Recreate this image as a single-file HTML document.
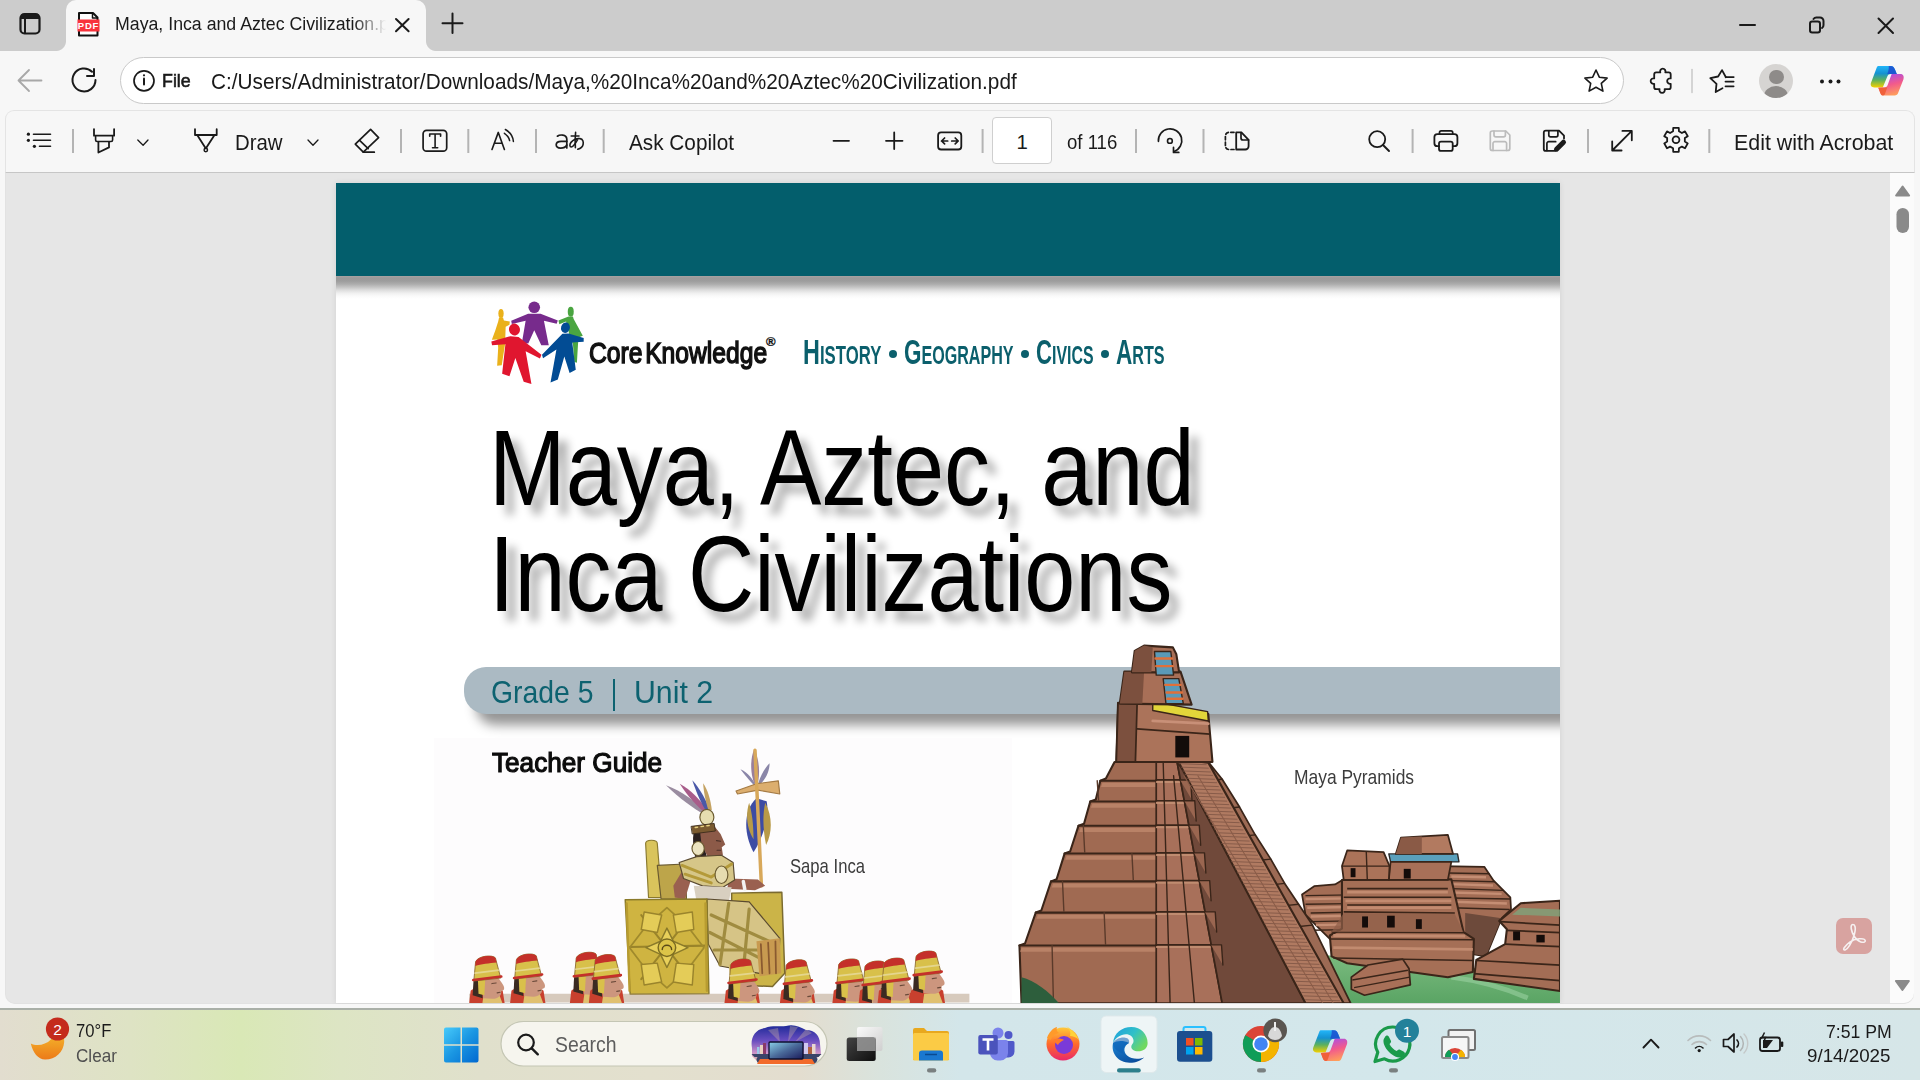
<!DOCTYPE html>
<html><head><meta charset="utf-8">
<style>
*{margin:0;padding:0;box-sizing:border-box}
html,body{width:1920px;height:1080px;overflow:hidden;background:#f7f7f7;font-family:"Liberation Sans",sans-serif;color:#1a1a1a}
.a{position:absolute}
svg.o{position:absolute;left:0;top:0;overflow:visible}
.t{position:absolute;white-space:nowrap;line-height:1}
</style></head><body>

<div class="a" style="left:0;top:0;width:1920px;height:51px;background:#cccccc"></div>
<div class="a" style="left:66px;top:0;width:360px;height:51px;background:#f7f7f7;border-radius:10px 10px 0 0"></div>
<div class="a" style="left:56px;top:41px;width:10px;height:10px;background:radial-gradient(circle at 0 0,#cccccc 9.5px,#f7f7f7 10.5px)"></div>
<div class="a" style="left:426px;top:41px;width:10px;height:10px;background:radial-gradient(circle at 100% 0,#cccccc 9.5px,#f7f7f7 10.5px)"></div>
<div class="a" style="left:120px;top:57px;width:1504px;height:47px;background:#fff;border:1px solid #c9c9c9;border-radius:24px"></div>
<div class="a" style="left:5px;top:110px;width:1910px;height:63px;background:#f7f7f7;border:1px solid #e4e4e4;border-bottom:1px solid #c6c6c6;border-radius:9px 9px 0 0"></div>
<div class="a" style="left:5px;top:173px;width:1909px;height:831px;background:#e6e6e6;border-radius:0 0 10px 10px;border:1px solid #e2e2e2;border-top:none"></div>
<div class="a" style="left:1890px;top:173px;width:24px;height:830px;background:#fbfbfb;border-radius:0 0 10px 0"></div>

<div class="t" style="left:114.58px;top:15.00px;font-size:18.46px;font-weight:normal;color:#1a1a1a;transform:scaleX(0.9616);transform-origin:0 0;-webkit-mask-image:linear-gradient(90deg,#000 0,#000 248px,transparent 282px);mask-image:linear-gradient(90deg,#000 0,#000 248px,transparent 282px);width:292px;overflow:hidden;">Maya, Inca and Aztec Civilization.p</div>
<div class="t" style="left:161.57px;top:72.00px;font-size:18.90px;font-weight:normal;color:#1a1a1a;transform:scaleX(0.9444);transform-origin:0 0;-webkit-text-stroke:0.6px #1a1a1a;">File</div>
<div class="t" style="left:211.46px;top:72.00px;font-size:21.37px;font-weight:normal;color:#1a1a1a;transform:scaleX(0.9723);transform-origin:0 0;">C:/Users/Administrator/Downloads/Maya,%20Inca%20and%20Aztec%20Civilization.pdf</div>
<div class="t" style="left:235.37px;top:132.00px;font-size:21.80px;font-weight:normal;color:#1a1a1a;transform:scaleX(0.9356);transform-origin:0 0;">Draw</div>
<div class="t" style="left:629.10px;top:132.00px;font-size:21.66px;font-weight:normal;color:#1a1a1a;transform:scaleX(0.9582);transform-origin:0 0;">Ask Copilot</div>
<div class="a" style="left:992px;top:117px;width:60px;height:47px;background:#fff;border:1px solid #cfcfcf;border-radius:4px"></div>
<div class="t" style="left:1016.47px;top:132.00px;font-size:20.35px;font-weight:normal;color:#1a1a1a;">1</div>
<div class="t" style="left:1067.26px;top:132.00px;font-size:20.35px;font-weight:normal;color:#1a1a1a;transform:scaleX(0.9136);transform-origin:0 0;">of 116</div>
<div class="t" style="left:1733.59px;top:132.00px;font-size:22.09px;font-weight:normal;color:#1a1a1a;transform:scaleX(0.9686);transform-origin:0 0;">Edit with Acrobat</div>
<svg class="o" width="1920" height="180" fill="none" stroke="#1a1a1a" stroke-width="1.7" stroke-linecap="round" stroke-linejoin="round">
  <rect x="20.5" y="14" width="19" height="19.5" rx="4" stroke-width="2.2"/>
  <rect x="21" y="14.5" width="18" height="4.5" fill="#1a1a1a" stroke="none"/>
  <path d="M25 19v14" stroke-width="2"/>
  <path d="M79 13h14l4.5 4.5V35.5H79z" fill="#fff" stroke="#111" stroke-width="2"/>
  <path d="M92.5 13.5v4.5h4.5" stroke="#111" stroke-width="1.5"/>
  <rect x="77.5" y="19.5" width="22" height="12" fill="#f8333c" stroke="none"/>
  <text x="88.5" y="29.3" font-family="Liberation Sans" font-weight="bold" font-size="9.5" fill="#fff" stroke="none" text-anchor="middle" letter-spacing="0.8">PDF</text>
  <path d="M396 19l12.6 12.3M408.6 19l-12.6 12.3" stroke-width="2"/>
  <path d="M452.5 13.5v19.5M442.5 23.2h20" stroke-width="2"/>
  <path d="M1740 25h15" stroke-width="2"/>
  <rect x="1810" y="21.5" width="10" height="11" rx="2.2" stroke-width="2"/>
  <path d="M1813.5 19a3.5 3.5 0 0 1 3-1.5h3.5a3.5 3.5 0 0 1 3.5 3.5v4a3.5 3.5 0 0 1 -1.5 3" stroke-width="2"/>
  <path d="M1878.5 18.5l14.5 14.5M1893 18.5l-14.5 14.5" stroke-width="2"/>
  <path d="M41.5 80.5H18.5M29 70l-10.5 10.5L29 91" stroke="#a8a8a8" stroke-width="1.8"/>
  <path d="M95.5 80a11.5 11.5 0 1 1 -3.5 -8.3" stroke-width="2"/>
  <path d="M94 69v7h-7" stroke-width="2"/>
  <circle cx="144" cy="80.8" r="10" stroke-width="1.7"/>
  <path d="M144 78.5v6" stroke-width="2"/>
  <circle cx="144" cy="75.3" r="1.1" fill="#1a1a1a" stroke="none"/>
  <path d="M1596 70l3.3 7.2 7.8.9-5.8 5.3 1.6 7.7-6.9-3.9-6.9 3.9 1.6-7.7-5.8-5.3 7.8-.9z" stroke-width="1.6"/>
  <path d="M1656.2 72.4h4.1a2.7 2.7 0 1 1 5 0h3.4a2 2 0 0 1 2 2v4a2.8 2.8 0 1 0 0 5.4v3.4a2 2 0 0 1 -2 2h-4.1a2.7 2.7 0 1 1 -5 0h-3.4a2 2 0 0 1 -2-2v-3.4a2.8 2.8 0 1 1 0-5.4v-4a2 2 0 0 1 2-2z" stroke-width="1.8"/>
  <path d="M1692 69.5v23" stroke="#c8c8c8" stroke-width="1.5"/>
  <path d="M1722.5 88.3l-6.8 3.7 .8-8.2-6.2-5.7 7.8-1.6 3.9-6.4 3.9 7.1" stroke-width="1.8"/>
  <path d="M1725.7 77.1h8M1725.5 81.6h8.1M1725.5 86.3h8.1" stroke-width="1.8"/>
  <circle cx="1822" cy="81.5" r="2" fill="#1a1a1a" stroke="none"/>
  <circle cx="1830.5" cy="81.5" r="2" fill="#1a1a1a" stroke="none"/>
  <circle cx="1838.5" cy="81.5" r="2" fill="#1a1a1a" stroke="none"/>
</svg>
<div class="a" style="left:1759px;top:64px;width:34px;height:34px;border-radius:50%;background:#d6d4d2;overflow:hidden">
  <div class="a" style="left:10px;top:5.5px;width:14.5px;height:14.5px;border-radius:50%;background:#8e8b89"></div>
  <div class="a" style="left:5px;top:22px;width:24px;height:20px;border-radius:50%;background:#8e8b89"></div>
</div>

<svg class="o" width="1920" height="180" fill="none" stroke="#1a1a1a" stroke-width="1.7" stroke-linecap="round" stroke-linejoin="round">
  <!-- list -->
  <circle cx="28.4" cy="134.2" r="1.6" fill="#1a1a1a" stroke="none"/>
  <circle cx="28.4" cy="140.3" r="1.6" fill="#1a1a1a" stroke="none"/>
  <circle cx="34.4" cy="146.3" r="1.6" fill="#1a1a1a" stroke="none"/>
  <path d="M33.5 134.2h17M33.5 140.3h17M39.5 146.3h11" stroke-width="1.6"/>
  <!-- separators -->
  <g stroke="#b4b4b4" stroke-width="2" stroke-linecap="butt">
    <path d="M73 129v24M401 129v24M468.3 129v24M536 129v24M603.7 129v24M982.6 129v24M1136 129v24M1203.5 129v24M1412.6 129v24M1588 129v24M1709.3 129v24"/>
  </g>
  <!-- highlighter -->
  <path d="M94 129.1v6.6h20.1v-6.6" stroke-width="1.8"/>
  <path d="M95.6 136.5v3.5a1.5 1.5 0 0 0 1.5 1.5h14a1.5 1.5 0 0 0 1.5-1.5v-3.5" stroke-width="1.6"/>
  <path d="M98.4 141.9v10.6l10.6-5.1v-5.5" stroke-width="1.8"/>
  <path d="M137.8 140l5.3 5.2 4.9-5.2" stroke-width="1.3"/>
  <!-- draw pen -->
  <path d="M195 129.2v5.8h21.7v-5.8" stroke-width="1.8"/>
  <path d="M197.5 135.4l8.3 13 8.4-13" stroke-width="1.8"/>
  <circle cx="205.8" cy="150" r="1.7" stroke-width="1.5"/>
  <path d="M308 140l5 5.2 5-5.2" stroke-width="1.3"/>
  <!-- eraser -->
  <path d="M370.6 129.3l8 8.4-15.3 14.5-8-8z" stroke-width="1.7"/>
  <path d="M359.6 140.3l8.6 8.3M363.3 152.2h11" stroke-width="1.7"/>
  <!-- text box -->
  <rect x="423.1" y="130.3" width="23.6" height="20.9" rx="3.5" stroke-width="1.7"/>
  <path d="M429.7 136.2v-2.2h10.9v2.2M435.1 134v13.8M432.5 147.8h5.2" stroke-width="1.6"/>
  <!-- read aloud -->
  <path d="M492 149.5l6.3-17.1 6.1 17.1M494.7 143.2h7.2" stroke-width="1.6"/>
  <path d="M504.4 133.3q4.6 3.2 5.2 7.3" stroke-width="1.5"/>
  <path d="M505.4 129.5q7.3 4.3 8 11.9" stroke-width="1.5"/>
  <!-- a-a -->
  <path d="M557.4 136.2C559.5 134.6 566.4 134 566.8 139V148" stroke-width="1.7"/>
  <path d="M566.8 141.3H561.2C557.8 141.3 556.2 143 556.2 144.8 556.2 147 558 148.1 560.6 148.1 563.6 148.1 566 146.6 566.8 145" stroke-width="1.7"/>
  <path d="M571.2 136h7.8M575.6 132.3C575 138 575 143.5 575.4 147.6" stroke-width="1.6"/>
  <path d="M578.2 138.6C576.2 142.2 573.3 147 571.2 147 569.6 147 569.4 144.2 571 142.4 573.2 140 577 138.2 580 138.6 583 139 583.6 142 583.1 144.5 582.6 147 580.2 148.6 577.8 149.3" stroke-width="1.6"/>
  <!-- zoom -->
  <path d="M833.5 140.8h15.5M886 140.8h16.5M894.2 132.5v16.5" stroke-width="1.8"/>
  <!-- fit width -->
  <rect x="938.1" y="132.4" width="23.2" height="17.1" rx="3" stroke-width="1.8"/>
  <path d="M941.5 141h6.2M944.6 138l-3 3 3 2.8M951.7 141h6.2M955.2 138l3 3-3 2.8" stroke-width="1.7"/>
  <!-- rotate -->
  <path d="M1158.4 141.3a11.7 11.7 0 1 1 15.7 10.2" stroke-width="1.7"/>
  <path d="M1173.5 147.4v5h5.3" stroke-width="1.7"/>
  <circle cx="1169.9" cy="140.9" r="2.4" stroke-width="1.6"/>
  <!-- page view -->
  <path d="M1234 132.3h-5a3.6 3.6 0 0 0 -3.6 3.6v10a3.6 3.6 0 0 0 3.6 3.6h5" stroke-width="1.7" stroke-dasharray="3.2 2.4"/>
  <path d="M1236.2 132.3h5.2l7.2 7.5v6.4a3.3 3.3 0 0 1 -3.3 3.3h-9.1z" stroke-width="1.8"/>
  <path d="M1241 132.5v5.5a2 2 0 0 0 2 2h5.5" stroke-width="1.7"/>
  <!-- search -->
  <circle cx="1377.2" cy="139.2" r="8" stroke-width="1.8"/>
  <path d="M1383 145l6 6" stroke-width="1.9"/>
  <!-- print -->
  <path d="M1439.5 134v-1.5a1.7 1.7 0 0 1 1.7-1.7h9.8a1.7 1.7 0 0 1 1.7 1.7v1.5" stroke-width="1.7"/>
  <path d="M1439 146.2h-1.6a3 3 0 0 1 -3-3v-6.1a3 3 0 0 1 3-3h17a3 3 0 0 1 3 3v6.1a3 3 0 0 1 -3 3h-1.6" stroke-width="1.8"/>
  <rect x="1439" y="141.6" width="13.7" height="9.3" rx="2" stroke-width="1.8"/>
  <!-- save disabled -->
  <path d="M1492.3 131h13.5l4 4v13.5a2 2 0 0 1 -2 2h-15.5a2 2 0 0 1 -2-2v-15.5a2 2 0 0 1 2-2z" stroke="#bcbcbc" stroke-width="1.7"/>
  <path d="M1494 131v4a1.8 1.8 0 0 0 1.8 1.8h7.8a1.8 1.8 0 0 0 1.8-1.8v-4M1493 150.5v-7a1.8 1.8 0 0 1 1.8-1.8h10a1.8 1.8 0 0 1 1.8 1.8v7" stroke="#bcbcbc" stroke-width="1.7"/>
  <!-- save as -->
  <path d="M1555 150.9h-9.2a2 2 0 0 1 -2-2v-16.3a2 2 0 0 1 2-2h13.2l5 5v3" stroke-width="1.8"/>
  <path d="M1548.8 131v4a1.8 1.8 0 0 0 1.8 1.8h5.5a1.8 1.8 0 0 0 1.8-1.8v-4M1546.9 150.5v-7a1.8 1.8 0 0 1 1.8-1.8h7" stroke-width="1.7"/>
  <path d="M1556.5 149.2l7-7" stroke-width="5"/>
  <!-- fullscreen -->
  <path d="M1622.4 130.9h9.4v9.4M1631.8 130.9l-19.6 19.6M1612.2 141.4v9.1h9.4" stroke-width="1.8"/>
  <!-- gear -->
  <path d="M1673.06 131.29 L1673.23 127.82 L1678.77 127.82 L1678.93 131.29 L1681.90 133.00 L1685.00 131.41 L1687.76 136.20 L1684.83 138.08 L1684.84 141.51 L1687.76 143.40 L1685.00 148.19 L1681.90 146.59 L1678.94 148.31 L1678.77 151.78 L1673.23 151.78 L1673.07 148.31 L1670.10 146.60 L1667.00 148.19 L1664.24 143.40 L1667.17 141.52 L1667.16 138.09 L1664.24 136.20 L1667.00 131.41 L1670.10 133.01z" stroke-width="1.8"/>
  <circle cx="1676" cy="139.8" r="3.4" stroke-width="1.8"/>
</svg>

<svg class="o" width="1920" height="180"><g transform="translate(1865,60) scale(0.037)">
<defs>
<linearGradient id="acpl" x1="0" y1="0" x2="0" y2="1"><stop offset="0" stop-color="#22b6fa"/><stop offset="0.35" stop-color="#1592d0"/><stop offset="0.65" stop-color="#5ab060"/><stop offset="1" stop-color="#f4d000"/></linearGradient>
<linearGradient id="acpr" x1="0.3" y1="0" x2="0.6" y2="1"><stop offset="0" stop-color="#a84ee8"/><stop offset="0.5" stop-color="#f25a8c"/><stop offset="1" stop-color="#ffa05a"/></linearGradient>
</defs>
<path d="M350 160L700 160C760 160 790 200 810 260L860 380 700 380C650 380 620 400 600 450L480 740 250 740C180 740 140 690 160 620L300 250C320 190 340 160 350 160z" fill="url(#acpl)"/>
<path d="M640 160L700 160C760 160 790 200 810 260L860 380 600 380C640 300 650 200 640 160z" fill="#1c4ed0" opacity="0.85"/>
<path d="M720 380L960 380C1030 380 1060 440 1040 520L900 880C880 940 850 960 800 960L520 960C460 960 430 940 420 900L360 750 520 740C560 740 590 720 610 680z" fill="url(#acpr)"/>
<path d="M360 750L600 740 540 920C520 960 480 970 450 950 420 930 400 860 360 750z" fill="#f0603a"/>
</g></svg>

<div class="a" style="left:336px;top:183px;width:1224px;height:820px;background:#fff;overflow:hidden;box-shadow:0 0 6px rgba(0,0,0,.09)">
<div class="a" style="left:-336px;top:-183px;width:1920px;height:1080px">
<div class="a" style="left:336px;top:183px;width:1224px;height:93px;background:#035e6c"></div>
<div class="a" style="left:336px;top:276px;width:1224px;height:23px;background:linear-gradient(#a8a2a2 0,#9a9a9a 2px,#9d9d9d 5px,#acacac 8px,#c3c3c3 11px,#dcdcdc 14px,#efefef 17px,#fafafa 20px,#fff 23px)"></div>
<div class="a" style="left:434px;top:738px;width:578px;height:270px;background:#fdfcfd"></div>
<div class="a" style="left:464px;top:667px;width:1120px;height:47px;background:#abbac3;border-radius:22px 0 0 22px;box-shadow:9px 14px 12px -3px rgba(0,0,0,.42)"></div>
<div class="t" style="left:490.78px;top:677.00px;font-size:31.25px;font-weight:normal;color:#0d6270;transform:scaleX(0.9073);transform-origin:0 0;">Grade 5</div>
<div class="a" style="left:613px;top:679px;width:2.2px;height:31.5px;background:#0d6270"></div>
<div class="t" style="left:633.53px;top:677.00px;font-size:31.25px;font-weight:normal;color:#0d6270;transform:scaleX(0.9684);transform-origin:0 0;">Unit 2</div>
<div class="t" style="left:589.37px;top:338.00px;font-size:29.80px;font-weight:normal;color:#111;transform:scaleX(0.8275);transform-origin:0 0;word-spacing:-5px;-webkit-text-stroke:1.5px #111;">Core Knowledge</div>
<div class="t" style="left:766px;top:335px;font-size:13px;font-weight:bold;color:#111;-webkit-text-stroke:0.3px #111">&#174;</div>
<div class="t" style="left:803.48px;top:335.00px;font-size:34.88px;font-weight:bold;color:#0b5f6c;transform:scaleX(0.6700);transform-origin:0 0;">H<span style="font-size:25.00px">ISTORY</span></div>
<div class="t" style="left:904.10px;top:335.00px;font-size:34.88px;font-weight:bold;color:#0b5f6c;transform:scaleX(0.6438);transform-origin:0 0;">G<span style="font-size:25.00px">EOGRAPHY</span></div>
<div class="t" style="left:1036.11px;top:335.00px;font-size:34.88px;font-weight:bold;color:#0b5f6c;transform:scaleX(0.6351);transform-origin:0 0;">C<span style="font-size:25.00px">IVICS</span></div>
<div class="t" style="left:1116.44px;top:335.00px;font-size:34.88px;font-weight:bold;color:#0b5f6c;transform:scaleX(0.6467);transform-origin:0 0;">A<span style="font-size:25.00px">RTS</span></div>
<div class="a" style="left:889.0px;top:350px;width:8px;height:8px;border-radius:50%;background:#0b5f6c"></div>
<div class="a" style="left:1021.2px;top:350px;width:8px;height:8px;border-radius:50%;background:#0b5f6c"></div>
<div class="a" style="left:1101.0px;top:350px;width:8px;height:8px;border-radius:50%;background:#0b5f6c"></div>
<div class="t" style="left:489.34px;top:415.00px;font-size:107.56px;font-weight:normal;color:#000;transform:scaleX(0.8554);transform-origin:0 0;text-shadow:11px 10px 9px rgba(0,0,0,.30);">Maya, Aztec, and</div>
<div class="t" style="left:488.74px;top:521.00px;font-size:107.56px;font-weight:normal;color:#000;transform:scaleX(0.8531);transform-origin:0 0;text-shadow:11px 10px 9px rgba(0,0,0,.30);">Inca Civilizations</div>
<div class="t" style="left:491.98px;top:749.00px;font-size:27.62px;font-weight:normal;color:#0c0c0c;transform:scaleX(0.9474);transform-origin:0 0;-webkit-text-stroke:1.2px #0c0c0c;">Teacher Guide</div>
<div class="t" style="left:790.45px;top:856.00px;font-size:20.06px;font-weight:normal;color:#3c3c3c;transform:scaleX(0.8304);transform-origin:0 0;">Sapa Inca</div>
<div class="t" style="left:1294.21px;top:768.00px;font-size:19.62px;font-weight:normal;color:#3c3c3c;transform:scaleX(0.8884);transform-origin:0 0;">Maya Pyramids</div>
<svg class="o" width="1920" height="1080" style="position:absolute;left:0;top:0">
<defs>
<linearGradient id="gs" x1="0" y1="0" x2="0" y2="1"><stop offset="0" stop-color="#7cbc80"/><stop offset="1" stop-color="#5aa464"/></linearGradient>
<pattern id="hatch" width="20" height="14" patternUnits="userSpaceOnUse" patternTransform="rotate(-33)"><rect width="20" height="14" fill="#b07a62"/><path d="M0 7h20" stroke="#6e4c3c" stroke-width="3"/></pattern>
<pattern id="hatch2" width="20" height="12" patternUnits="userSpaceOnUse" patternTransform="rotate(-30)"><rect width="20" height="12" fill="#b98068"/><path d="M0 6h20" stroke="#6e4c3c" stroke-width="3"/></pattern>
</defs>
<g transform="translate(485,295) scale(0.08795)" stroke-linejoin="round">
<ellipse cx="182" cy="210" rx="30" ry="52" fill="#eab11b"/><path d="M160 255L205 255 215 290 282 300 278 338 235 360 228 560 190 800 138 805 150 600 140 505 78 510 118 400 150 300z" fill="#eab11b"/>
<ellipse cx="975" cy="190" rx="34" ry="56" fill="#4aa541"/><path d="M950 245L1000 245 1008 272 1112 462 1062 482 1045 770 1015 762 1000 560 962 462 922 302 845 332 835 290z" fill="#4aa541"/>
<circle cx="560" cy="140" r="66" fill="#772b8c"/><path d="M490 212L298 292 305 330 462 292 420 540 492 552 560 402 640 572 725 572 670 292 815 328 828 290 632 212z" fill="#772b8c"/>
<ellipse cx="335" cy="392" rx="62" ry="68" transform="rotate(-15 335 392)" fill="#e0162f"/><path d="M290 468L72 528 80 572 232 560 195 895 278 925 345 715 440 985 528 1012 462 640 625 722 642 680 382 478z" fill="#e0162f"/>
<ellipse cx="915" cy="372" rx="50" ry="60" transform="rotate(15 915 372)" fill="#024c94"/><path d="M880 442L648 680 660 718 812 620 745 995 828 962 902 700 962 888 1032 850 992 540 1122 532 1122 488 950 438z" fill="#024c94"/>
</g>
<g transform="translate(1000,630) scale(0.34717)" stroke-linejoin="round">
<path d="M880 930L1100 955 1613 990 1613 1075 880 1075z" fill="url(#gs)"/>
<path d="M1300 1000C1380 1010 1450 1030 1520 1060" stroke="#9ad0a0" stroke-width="14" fill="none" opacity="0.6"/>
<path d="M1270 680L1395 682 1422 722 1470 770 1472 805 1445 830 1400 940 1340 930 1300 760z" fill="#a36d55" stroke="#3a2519" stroke-width="5"/>
<path d="M1290 700L1410 702" stroke="#3a2519" stroke-width="4"/>
<path d="M1295 722L1425 725" stroke="#3a2519" stroke-width="4"/>
<path d="M1300 745L1450 750" stroke="#3a2519" stroke-width="4"/>
<path d="M1300 772L1470 775" stroke="#3a2519" stroke-width="4"/>
<path d="M1300 800L1468 805" stroke="#3a2519" stroke-width="4"/>
<path d="M1300 710L1400 712M1300 732L1420 736M1300 756L1445 760M1305 783L1460 788" stroke="#c58e74" stroke-width="7"/>
<path d="M1340 815L1445 830 1400 940 1340 930z" fill="#6d4a3b"/>
<path d="M870 762L905 738 965 733 990 718 1010 720 1010 900 950 890 920 860 880 820z" fill="#a36d55" stroke="#3a2519" stroke-width="5"/>
<path d="M880 765L1010 763" stroke="#3a2519" stroke-width="4"/>
<path d="M880 790L1010 788" stroke="#3a2519" stroke-width="4"/>
<path d="M895 815L1010 813" stroke="#3a2519" stroke-width="4"/>
<path d="M895 840L1010 838" stroke="#3a2519" stroke-width="4"/>
<path d="M895 865L1010 863" stroke="#3a2519" stroke-width="4"/>
<path d="M880 775L1005 773M885 800L1005 798M895 825L1005 823M910 850L1005 848" stroke="#c58e74" stroke-width="7"/>
<path d="M985 720L1300 718 1335 870 1365 890 1362 985 1290 1000 1000 960 955 940 950 880 985 860z" fill="#a56f56" stroke="#3a2519" stroke-width="6"/>
<path d="M1000 745L1290 745" stroke="#3a2519" stroke-width="4.5"/>
<path d="M990 770L1300 770" stroke="#3a2519" stroke-width="4.5"/>
<path d="M1000 792L1300 792" stroke="#3a2519" stroke-width="4.5"/>
<path d="M990 812L1310 815" stroke="#3a2519" stroke-width="4.5"/>
<path d="M955 870L1335 872" stroke="#3a2519" stroke-width="4.5"/>
<path d="M950 890L1365 892" stroke="#3a2519" stroke-width="4.5"/>
<path d="M960 945L1362 952" stroke="#3a2519" stroke-width="4.5"/>
<path d="M1000 755L1290 755M995 780L1300 780M1000 800L1300 800M960 880L1340 882M960 915L1362 920" stroke="#c28b70" stroke-width="8"/>
<path d="M990 815L1310 818 1335 870 955 870z" fill="#8e5e49" opacity="0.7"/>
<rect x="1043" y="825" width="17" height="32" fill="#140c0a"/>
<rect x="1115" y="823" width="22" height="34" fill="#140c0a"/>
<rect x="1198" y="833" width="17" height="28" fill="#140c0a"/>
<path d="M1012 1000L1060 965 1160 948 1178 975 1182 1022 1050 1052 1012 1035z" fill="#a87058" stroke="#3a2519" stroke-width="5"/>
<path d="M1015 1008L1175 980M1020 1030L1180 1000" stroke="#3a2519" stroke-width="4"/>
<path d="M1438 838L1500 787 1613 780 1613 1040 1365 1005 1372 950 1455 905 1460 862z" fill="#a36d55" stroke="#3a2519" stroke-width="6"/>
<path d="M1440 840L1613 850M1460 865L1613 872M1455 905L1613 912M1372 952L1613 965M1365 990L1613 1010" stroke="#3a2519" stroke-width="5"/>
<path d="M1500 800L1613 805 1613 825 1475 820z" fill="#7fa27a" opacity="0.8"/>
<rect x="1478" y="868" width="20" height="26" fill="#140c0a"/><rect x="1545" y="878" width="24" height="22" fill="#140c0a"/>
<path d="M1120 645L1318 645 1322 668 1125 668z" fill="#5aa0bc" stroke="#2a2a2a" stroke-width="4"/>
<path d="M1125 668L1300 668 1290 720 1120 720z" fill="#a87058" stroke="#3a2519" stroke-width="5"/><rect x="1163" y="688" width="20" height="28" fill="#140c0a"/>
<path d="M1155 598L1290 590 1305 645 1140 645z" fill="#b27a60" stroke="#3a2519" stroke-width="5"/><path d="M1155 598L1215 595 1215 645 1140 645z" fill="#8a5a46"/>
<path d="M1000 635L1105 640 1122 680 1120 720 990 720 985 680z" fill="#ab7359" stroke="#3a2519" stroke-width="5"/><path d="M985 680L1122 680M1055 638L1058 720" stroke="#3a2519" stroke-width="4"/><rect x="1010" y="686" width="14" height="26" fill="#140c0a"/>
</g>
<g transform="translate(1000,630) scale(0.34717)" stroke-linejoin="round" stroke-linecap="round">
<path d="M600 380 L330 380 L305 428 L289 434 L276 488 L260 494 L242 558 L226 564 L202 638 L186 644 L163 718 L147 724 L119 808 L103 814 L72 903 L56 909 L62 1075 L880 1075z" fill="#a06a52" stroke="#3a2519" stroke-width="6"/>
<path d="M289 434L460 434" stroke="#3a2519" stroke-width="6" fill="none"/>
<path d="M295 440L455 440L455 452L291 452z" fill="#b98267"/>
<path d="M260 494L460 494" stroke="#3a2519" stroke-width="6" fill="none"/>
<path d="M266 500L455 500L455 512L262 512z" fill="#b98267"/>
<path d="M226 564L460 564" stroke="#3a2519" stroke-width="6" fill="none"/>
<path d="M232 570L455 570L455 582L228 582z" fill="#b98267"/>
<path d="M186 644L460 644" stroke="#3a2519" stroke-width="6" fill="none"/>
<path d="M192 650L455 650L455 662L188 662z" fill="#b98267"/>
<path d="M147 724L460 724" stroke="#3a2519" stroke-width="6" fill="none"/>
<path d="M153 730L455 730L455 742L149 742z" fill="#b98267"/>
<path d="M103 814L460 814" stroke="#3a2519" stroke-width="6" fill="none"/>
<path d="M109 820L455 820L455 832L105 832z" fill="#b98267"/>
<path d="M56 909L460 909" stroke="#3a2519" stroke-width="6" fill="none"/>
<path d="M62 915L455 915L455 927L58 927z" fill="#b98267"/>
<path d="M240 564L244 640" stroke="#5a3a2a" stroke-width="4"/>
<path d="M180 724L184 810" stroke="#5a3a2a" stroke-width="4"/>
<path d="M300 814L304 905" stroke="#5a3a2a" stroke-width="4"/>
<path d="M150 909L154 1075" stroke="#5a3a2a" stroke-width="4"/>
<path d="M380 644L384 720" stroke="#5a3a2a" stroke-width="4"/>
<path d="M280 434L284 490" stroke="#5a3a2a" stroke-width="4"/>
<path d="M450 380L510 380 640 1075 450 1075z" fill="#a8705a" stroke="#3a2519" stroke-width="5"/>
<path d="M450 432L519 432" stroke="#3a2519" stroke-width="5"/>
<path d="M452 438L517 438" stroke="#c08c70" stroke-width="6"/>
<path d="M450 492L531 492" stroke="#3a2519" stroke-width="5"/>
<path d="M452 498L529 498" stroke="#c08c70" stroke-width="6"/>
<path d="M450 562L544 562" stroke="#3a2519" stroke-width="5"/>
<path d="M452 568L542 568" stroke="#c08c70" stroke-width="6"/>
<path d="M450 642L559 642" stroke="#3a2519" stroke-width="5"/>
<path d="M452 648L557 648" stroke="#c08c70" stroke-width="6"/>
<path d="M450 722L574 722" stroke="#3a2519" stroke-width="5"/>
<path d="M452 728L572 728" stroke="#c08c70" stroke-width="6"/>
<path d="M450 812L590 812" stroke="#3a2519" stroke-width="5"/>
<path d="M452 818L588 818" stroke="#c08c70" stroke-width="6"/>
<path d="M450 907L608 907" stroke="#3a2519" stroke-width="5"/>
<path d="M452 913L606 913" stroke="#c08c70" stroke-width="6"/>
<path d="M470 380L490 1075M500 420L560 1075" stroke="#3a2519" stroke-width="4"/>
<path d="M510 380L540 420 880 1075 640 1075z" fill="#70493a" stroke="#3a2519" stroke-width="5"/>
<path d="M519 432L549 432L553 490" stroke="#3a2519" stroke-width="4" fill="#9a6650"/>
<path d="M531 492L561 492L565 550" stroke="#3a2519" stroke-width="4" fill="#9a6650"/>
<path d="M544 562L574 562L578 620" stroke="#3a2519" stroke-width="4" fill="#9a6650"/>
<path d="M559 642L589 642L593 700" stroke="#3a2519" stroke-width="4" fill="#9a6650"/>
<path d="M574 722L604 722L608 780" stroke="#3a2519" stroke-width="4" fill="#9a6650"/>
<path d="M590 812L620 812L624 870" stroke="#3a2519" stroke-width="4" fill="#9a6650"/>
<path d="M608 907L638 907L642 965" stroke="#3a2519" stroke-width="4" fill="#9a6650"/>
<path d="M600 380L640 430 690 510 735 590 780 660 820 730 860 790 900 850 1010 1075 900 1075z" fill="#9c6a54" stroke="#3a2519" stroke-width="5"/>
<path d="M640 430L602 434" stroke="#3a2519" stroke-width="4"/>
<path d="M690 510L652 514" stroke="#3a2519" stroke-width="4"/>
<path d="M735 590L697 594" stroke="#3a2519" stroke-width="4"/>
<path d="M780 660L742 664" stroke="#3a2519" stroke-width="4"/>
<path d="M820 730L782 734" stroke="#3a2519" stroke-width="4"/>
<path d="M860 790L822 794" stroke="#3a2519" stroke-width="4"/>
<path d="M900 850L862 854" stroke="#3a2519" stroke-width="4"/>
<path d="M510 372L600 382 990 1075 880 1075z" fill="#b07a61" stroke="#3a2519" stroke-width="6"/>
<path d="M516 385L594 388" stroke="#7a5242" stroke-width="2.2"/>
<path d="M522 395L600 398" stroke="#7a5242" stroke-width="2.2"/>
<path d="M527 406L606 409" stroke="#7a5242" stroke-width="2.2"/>
<path d="M533 416L612 419" stroke="#7a5242" stroke-width="2.2"/>
<path d="M538 427L618 430" stroke="#7a5242" stroke-width="2.2"/>
<path d="M544 437L624 440" stroke="#7a5242" stroke-width="2.2"/>
<path d="M550 448L629 451" stroke="#7a5242" stroke-width="2.2"/>
<path d="M555 458L635 461" stroke="#7a5242" stroke-width="2.2"/>
<path d="M561 469L641 472" stroke="#7a5242" stroke-width="2.2"/>
<path d="M566 479L647 482" stroke="#7a5242" stroke-width="2.2"/>
<path d="M572 490L653 493" stroke="#7a5242" stroke-width="2.2"/>
<path d="M578 500L659 503" stroke="#7a5242" stroke-width="2.2"/>
<path d="M583 510L665 513" stroke="#7a5242" stroke-width="2.2"/>
<path d="M589 521L671 524" stroke="#7a5242" stroke-width="2.2"/>
<path d="M594 531L677 534" stroke="#7a5242" stroke-width="2.2"/>
<path d="M600 542L683 545" stroke="#7a5242" stroke-width="2.2"/>
<path d="M606 552L689 555" stroke="#7a5242" stroke-width="2.2"/>
<path d="M611 563L694 566" stroke="#7a5242" stroke-width="2.2"/>
<path d="M617 573L700 576" stroke="#7a5242" stroke-width="2.2"/>
<path d="M623 584L706 587" stroke="#7a5242" stroke-width="2.2"/>
<path d="M628 594L712 597" stroke="#7a5242" stroke-width="2.2"/>
<path d="M634 605L718 608" stroke="#7a5242" stroke-width="2.2"/>
<path d="M639 615L724 618" stroke="#7a5242" stroke-width="2.2"/>
<path d="M645 625L730 628" stroke="#7a5242" stroke-width="2.2"/>
<path d="M651 636L736 639" stroke="#7a5242" stroke-width="2.2"/>
<path d="M656 646L742 649" stroke="#7a5242" stroke-width="2.2"/>
<path d="M662 657L748 660" stroke="#7a5242" stroke-width="2.2"/>
<path d="M667 667L754 670" stroke="#7a5242" stroke-width="2.2"/>
<path d="M673 678L759 681" stroke="#7a5242" stroke-width="2.2"/>
<path d="M679 688L765 691" stroke="#7a5242" stroke-width="2.2"/>
<path d="M684 699L771 702" stroke="#7a5242" stroke-width="2.2"/>
<path d="M690 709L777 712" stroke="#7a5242" stroke-width="2.2"/>
<path d="M695 720L783 723" stroke="#7a5242" stroke-width="2.2"/>
<path d="M701 730L789 733" stroke="#7a5242" stroke-width="2.2"/>
<path d="M707 740L795 743" stroke="#7a5242" stroke-width="2.2"/>
<path d="M712 751L801 754" stroke="#7a5242" stroke-width="2.2"/>
<path d="M718 761L807 764" stroke="#7a5242" stroke-width="2.2"/>
<path d="M723 772L813 775" stroke="#7a5242" stroke-width="2.2"/>
<path d="M729 782L819 785" stroke="#7a5242" stroke-width="2.2"/>
<path d="M735 793L824 796" stroke="#7a5242" stroke-width="2.2"/>
<path d="M740 803L830 806" stroke="#7a5242" stroke-width="2.2"/>
<path d="M746 814L836 817" stroke="#7a5242" stroke-width="2.2"/>
<path d="M751 824L842 827" stroke="#7a5242" stroke-width="2.2"/>
<path d="M757 835L848 838" stroke="#7a5242" stroke-width="2.2"/>
<path d="M763 845L854 848" stroke="#7a5242" stroke-width="2.2"/>
<path d="M768 855L860 858" stroke="#7a5242" stroke-width="2.2"/>
<path d="M774 866L866 869" stroke="#7a5242" stroke-width="2.2"/>
<path d="M779 876L872 879" stroke="#7a5242" stroke-width="2.2"/>
<path d="M785 887L878 890" stroke="#7a5242" stroke-width="2.2"/>
<path d="M791 897L884 900" stroke="#7a5242" stroke-width="2.2"/>
<path d="M796 908L889 911" stroke="#7a5242" stroke-width="2.2"/>
<path d="M802 918L895 921" stroke="#7a5242" stroke-width="2.2"/>
<path d="M808 929L901 932" stroke="#7a5242" stroke-width="2.2"/>
<path d="M813 939L907 942" stroke="#7a5242" stroke-width="2.2"/>
<path d="M819 950L913 953" stroke="#7a5242" stroke-width="2.2"/>
<path d="M824 960L919 963" stroke="#7a5242" stroke-width="2.2"/>
<path d="M830 970L925 973" stroke="#7a5242" stroke-width="2.2"/>
<path d="M836 981L931 984" stroke="#7a5242" stroke-width="2.2"/>
<path d="M841 991L937 994" stroke="#7a5242" stroke-width="2.2"/>
<path d="M847 1002L943 1005" stroke="#7a5242" stroke-width="2.2"/>
<path d="M852 1012L949 1015" stroke="#7a5242" stroke-width="2.2"/>
<path d="M858 1023L954 1026" stroke="#7a5242" stroke-width="2.2"/>
<path d="M864 1033L960 1036" stroke="#7a5242" stroke-width="2.2"/>
<path d="M869 1044L966 1047" stroke="#7a5242" stroke-width="2.2"/>
<path d="M875 1054L972 1057" stroke="#7a5242" stroke-width="2.2"/>
<path d="M880 1065L978 1068" stroke="#7a5242" stroke-width="2.2"/>
<path d="M530 420L930 1075M570 420L960 1075" stroke="#8a5c48" stroke-width="3"/>
<path d="M340 210L440 210 600 242 612 380 335 380z" fill="#ab735a" stroke="#3a2519" stroke-width="6"/>
<path d="M340 210L395 210 390 380 335 380z" fill="#7c503e" stroke="#3a2519" stroke-width="5"/>
<path d="M395 285L605 300" stroke="#3a2519" stroke-width="5"/>
<path d="M440 262L600 270" stroke="#c89078" stroke-width="8"/>
<rect x="505" y="305" width="40" height="62" fill="#120c0a"/>
<path d="M440 206L598 235 600 262 440 232z" fill="#e2d63a" stroke="#3a2519" stroke-width="4"/>
<path d="M358 120L520 120 552 215 345 212z" fill="#a86f57" stroke="#3a2519" stroke-width="6"/>
<path d="M358 120L415 120 410 212 345 212z" fill="#7c503e"/>
<path d="M470 140L515 140 528 212 478 212z" fill="#5a9ab8" stroke="#3a2519" stroke-width="4"/><path d="M476 158L520 158M480 180L524 180M482 198L526 198" stroke="#e0703a" stroke-width="7"/>
<path d="M388 60L415 45 498 50 508 70 516 122 380 122z" fill="#a86f57" stroke="#3a2519" stroke-width="6"/>
<path d="M388 60L415 45 440 50 436 122 380 122z" fill="#7c503e"/>
<path d="M445 62L492 62 500 130 450 130z" fill="#5a9ab8" stroke="#3a2519" stroke-width="4"/><path d="M448 82L496 82M450 104L498 104" stroke="#e0703a" stroke-width="7"/>
<path d="M62 1000C100 1010 140 1040 170 1075L62 1075z" fill="#2d5e3c"/>
</g>
<g transform="translate(440,740) scale(0.29167)" stroke-linejoin="round" stroke-linecap="round">
<path d="M1078 30C1060 70 1065 130 1085 165 1100 120 1095 70 1078 30z" fill="#9a7f9a"/>
<path d="M1130 80C1110 100 1095 130 1088 160 1115 140 1130 110 1130 80zM1030 100C1050 125 1070 150 1085 162 1075 135 1055 110 1030 100z" fill="#8a86a8"/>
<path d="M1015 175L1085 150 1160 140 1165 185 1090 172 1020 185z" fill="#dcae6e" stroke="#a47a44" stroke-width="4"/>
<path d="M1085 200C1040 240 1040 320 1075 385 1110 330 1130 260 1120 210z" fill="#3d4ca4"/>
<path d="M1060 215C1045 260 1055 310 1075 340 1075 290 1070 250 1060 215zM1115 215C1140 260 1140 320 1118 360 1108 310 1105 260 1115 215z" fill="#b89a48"/>
<path d="M1080 35L1102 500" stroke="#d8a85a" stroke-width="12"/>
<path d="M705 355C705 340 745 340 745 355L760 540 715 540z" fill="#d9c45c" stroke="#8a7a30" stroke-width="4"/>
<path d="M745 430L840 425 845 545 758 545z" fill="#bda54a" stroke="#6a5a30" stroke-width="4"/>
<path d="M1000 525L1172 522 1182 800 1140 845 1000 840z" fill="#cbb448" stroke="#7a6a30" stroke-width="5"/>
<path d="M775 155C820 200 870 235 905 255L912 242C880 215 830 175 775 155z" fill="#9a8ca0"/>
<path d="M822 150C850 195 885 230 908 250L918 240C895 210 860 170 822 150z" fill="#a85c8a"/>
<path d="M865 138C880 185 900 225 915 248L926 240C912 205 890 165 865 138z" fill="#4a58a8"/>
<path d="M902 148C905 190 915 225 922 245L932 240C928 205 918 170 902 148z" fill="#c4a262"/>
<ellipse cx="915" cy="265" rx="24" ry="27" fill="#e6ddb0" stroke="#6a5a30" stroke-width="4"/>
<path d="M870 310C860 380 880 440 925 495L950 485C915 430 905 370 905 320z" fill="#2a2020"/>
<path d="M890 300L938 292 962 322 978 358 966 368 970 394 948 410 918 402 896 352z" fill="#8c5a48"/>
<path d="M948 345l14 2M950 378l12 0" stroke="#4a3028" stroke-width="4"/>
<path d="M862 296L940 286 944 312 866 322z" fill="#7a5a30" stroke="#3a2a1a" stroke-width="3"/><path d="M875 300l8-1M895 297l8-1M915 294l8-1" stroke="#e6d080" stroke-width="5"/>
<ellipse cx="885" cy="372" rx="21" ry="24" fill="#ebe3c0" stroke="#6a5a30" stroke-width="4"/>
<path d="M830 450L800 500 805 540 840 545 860 480z" fill="#9a6050"/>
<path d="M990 475L1090 478 1115 500 1080 515 985 510z" fill="#9a6050"/><path d="M1040 485L1045 512" stroke="#f2f2f2" stroke-width="12"/>
<path d="M820 420L880 400 965 395 1005 420 1010 480 970 505 900 500 835 475z" fill="#d6c688" stroke="#5a4a30" stroke-width="4"/>
<path d="M830 430L930 470 1000 425M840 460L930 490" stroke="#b49a3a" stroke-width="10" fill="none"/>
<ellipse cx="965" cy="462" rx="22" ry="30" fill="#e6dcb0" stroke="#6a5a30" stroke-width="4"/>
<path d="M870 500L1000 505 990 555 880 555z" fill="#d8cfc0"/>
<path d="M915 545L1060 555 1165 680 1160 785 1095 800 960 775 920 700z" fill="#d6c486" stroke="#5a4a30" stroke-width="4"/>
<path d="M930 600L1150 700M925 660L1120 760M990 560L960 770M1060 580L1040 790M940 720L1160 720" stroke="#a08c40" stroke-width="11" fill="none"/>
<path d="M1085 690L1165 680 1170 800 1095 810z" fill="#c89a50"/><path d="M1100 700L1105 800M1125 695L1130 800M1150 690L1152 800" stroke="#8a5a30" stroke-width="6"/>
<path d="M990 770L1060 780 1070 870 1000 870z" fill="#d4bb6a"/>
<path d="M635 548L915 545 922 870 652 872z" fill="#cfb441" stroke="#8a7a2a" stroke-width="5"/>
<path d="M690 600L860 820M860 600L690 820M650 710L915 705" stroke="#9a842a" stroke-width="7" fill="none"/>
<path d="M778 575L850 640 905 712 850 785 778 850 705 785 650 712 705 640z" fill="none" stroke="#a08a2c" stroke-width="6"/>
<path d="M700 590L760 600 745 660 690 650zM800 600L865 590 870 650 810 660zM690 770L745 765 760 830 700 840zM810 765L870 770 865 840 800 830z" fill="#e4cc58" stroke="#9a842c" stroke-width="5"/>
<path d="M778 645L800 690 850 712 800 735 778 780 756 735 706 712 756 690z" fill="#e8d05a" stroke="#8a7a2a" stroke-width="5"/>
<circle cx="778" cy="712" r="30" fill="#dcc448" stroke="#7a6a20" stroke-width="5"/><path d="M762 718a16 14 0 0 1 32 0" stroke="#5a4a18" stroke-width="5" fill="none"/>
<path d="M640 560L650 860M910 560L915 860" stroke="#b89c30" stroke-width="8"/>
</g>
<g transform="translate(440,740) scale(0.29167)" stroke-linejoin="round" stroke-linecap="round">
<path d="M100 870L1815 870 1815 900 100 900z" fill="#b8a088" opacity="0.55"/>
<path d="M100 905L105 860C125 840 195 840 215 860L222 905z" fill="#c8402e"/>
<path d="M150 870L200 865 215 905 145 905z" fill="#e0c070"/>
<path d="M142 820L198 813C210 830 226 847 218 857L210 861C212 875 200 887 180 887L148 885z" fill="#cc967e"/>
<path d="M178 835l14 -2M196 867l10 -2" stroke="#6a4a3a" stroke-width="4"/>
<path d="M115 823L142 823 146 885 112 875z" fill="#3a2a22"/>
<path d="M130 823L155 823 152 875 132 870z" fill="#d9c04a"/>
<path d="M116 825L122 760C130 740 180 735 190 747L208 815z" fill="#d8c04a" stroke="#8a6a30" stroke-width="3"/>
<path d="M122 760C130 740 180 735 190 747L194 763C170 765 140 769 121 775z" fill="#c4302a"/>
<path d="M114 823L210 811" stroke="#c4302a" stroke-width="9"/>
<path d="M120 799L202 789" stroke="#e8dca0" stroke-width="6" opacity="0.8"/>
<path d="M240 905L245 860C265 840 335 840 355 860L362 905z" fill="#c8402e"/>
<path d="M290 870L340 865 355 905 285 905z" fill="#e0c070"/>
<path d="M282 813L338 806C350 823 366 840 358 850L350 854C352 868 340 880 320 880L288 878z" fill="#cc967e"/>
<path d="M318 828l14 -2M336 860l10 -2" stroke="#6a4a3a" stroke-width="4"/>
<path d="M255 816L282 816 286 878 252 868z" fill="#3a2a22"/>
<path d="M270 816L295 816 292 868 272 863z" fill="#d9c04a"/>
<path d="M256 818L262 753C270 733 320 728 330 740L348 808z" fill="#d8c04a" stroke="#8a6a30" stroke-width="3"/>
<path d="M262 753C270 733 320 728 330 740L334 756C310 758 280 762 261 768z" fill="#c4302a"/>
<path d="M254 816L350 804" stroke="#c4302a" stroke-width="9"/>
<path d="M260 792L342 782" stroke="#e8dca0" stroke-width="6" opacity="0.8"/>
<path d="M445 905L450 860C470 840 540 840 560 860L567 905z" fill="#c8402e"/>
<path d="M495 870L545 865 560 905 490 905z" fill="#e0c070"/>
<path d="M487 807L543 800C555 817 571 834 563 844L555 848C557 862 545 874 525 874L493 872z" fill="#cc967e"/>
<path d="M523 822l14 -2M541 854l10 -2" stroke="#6a4a3a" stroke-width="4"/>
<path d="M460 810L487 810 491 872 457 862z" fill="#3a2a22"/>
<path d="M475 810L500 810 497 862 477 857z" fill="#d9c04a"/>
<path d="M461 812L467 747C475 727 525 722 535 734L553 802z" fill="#d8c04a" stroke="#8a6a30" stroke-width="3"/>
<path d="M467 747C475 727 525 722 535 734L539 750C515 752 485 756 466 762z" fill="#c4302a"/>
<path d="M459 810L555 798" stroke="#c4302a" stroke-width="9"/>
<path d="M465 786L547 776" stroke="#e8dca0" stroke-width="6" opacity="0.8"/>
<path d="M510 905L515 860C535 840 605 840 625 860L632 905z" fill="#c8402e"/>
<path d="M560 870L610 865 625 905 555 905z" fill="#e0c070"/>
<path d="M552 815L608 808C620 825 636 842 628 852L620 856C622 870 610 882 590 882L558 880z" fill="#cc967e"/>
<path d="M588 830l14 -2M606 862l10 -2" stroke="#6a4a3a" stroke-width="4"/>
<path d="M525 818L552 818 556 880 522 870z" fill="#3a2a22"/>
<path d="M540 818L565 818 562 870 542 865z" fill="#d9c04a"/>
<path d="M526 820L532 755C540 735 590 730 600 742L618 810z" fill="#d8c04a" stroke="#8a6a30" stroke-width="3"/>
<path d="M532 755C540 735 590 730 600 742L604 758C580 760 550 764 531 770z" fill="#c4302a"/>
<path d="M524 818L620 806" stroke="#c4302a" stroke-width="9"/>
<path d="M530 794L612 784" stroke="#e8dca0" stroke-width="6" opacity="0.8"/>
<path d="M975 905L980 860C1000 840 1070 840 1090 860L1097 905z" fill="#c8402e"/>
<path d="M1025 870L1075 865 1090 905 1020 905z" fill="#e0c070"/>
<path d="M1017 830L1073 823C1085 840 1101 857 1093 867L1085 871C1087 885 1075 897 1055 897L1023 895z" fill="#cc967e"/>
<path d="M1053 845l14 -2M1071 877l10 -2" stroke="#6a4a3a" stroke-width="4"/>
<path d="M990 833L1017 833 1021 895 987 885z" fill="#3a2a22"/>
<path d="M1005 833L1030 833 1027 885 1007 880z" fill="#d9c04a"/>
<path d="M991 835L997 770C1005 750 1055 745 1065 757L1083 825z" fill="#d8c04a" stroke="#8a6a30" stroke-width="3"/>
<path d="M997 770C1005 750 1055 745 1065 757L1069 773C1045 775 1015 779 996 785z" fill="#c4302a"/>
<path d="M989 833L1085 821" stroke="#c4302a" stroke-width="9"/>
<path d="M995 809L1077 799" stroke="#e8dca0" stroke-width="6" opacity="0.8"/>
<path d="M1165 905L1170 860C1190 840 1260 840 1280 860L1287 905z" fill="#c8402e"/>
<path d="M1215 870L1265 865 1280 905 1210 905z" fill="#e0c070"/>
<path d="M1207 833L1263 826C1275 843 1291 860 1283 870L1275 874C1277 888 1265 900 1245 900L1213 898z" fill="#cc967e"/>
<path d="M1243 848l14 -2M1261 880l10 -2" stroke="#6a4a3a" stroke-width="4"/>
<path d="M1180 836L1207 836 1211 898 1177 888z" fill="#3a2a22"/>
<path d="M1195 836L1220 836 1217 888 1197 883z" fill="#d9c04a"/>
<path d="M1181 838L1187 773C1195 753 1245 748 1255 760L1273 828z" fill="#d8c04a" stroke="#8a6a30" stroke-width="3"/>
<path d="M1187 773C1195 753 1245 748 1255 760L1259 776C1235 778 1205 782 1186 788z" fill="#c4302a"/>
<path d="M1179 836L1275 824" stroke="#c4302a" stroke-width="9"/>
<path d="M1185 812L1267 802" stroke="#e8dca0" stroke-width="6" opacity="0.8"/>
<path d="M1345 905L1350 860C1370 840 1440 840 1460 860L1467 905z" fill="#c8402e"/>
<path d="M1395 870L1445 865 1460 905 1390 905z" fill="#e0c070"/>
<path d="M1387 830L1443 823C1455 840 1471 857 1463 867L1455 871C1457 885 1445 897 1425 897L1393 895z" fill="#cc967e"/>
<path d="M1423 845l14 -2M1441 877l10 -2" stroke="#6a4a3a" stroke-width="4"/>
<path d="M1360 833L1387 833 1391 895 1357 885z" fill="#3a2a22"/>
<path d="M1375 833L1400 833 1397 885 1377 880z" fill="#d9c04a"/>
<path d="M1361 835L1367 770C1375 750 1425 745 1435 757L1453 825z" fill="#d8c04a" stroke="#8a6a30" stroke-width="3"/>
<path d="M1367 770C1375 750 1425 745 1435 757L1439 773C1415 775 1385 779 1366 785z" fill="#c4302a"/>
<path d="M1359 833L1455 821" stroke="#c4302a" stroke-width="9"/>
<path d="M1365 809L1447 799" stroke="#e8dca0" stroke-width="6" opacity="0.8"/>
<path d="M1435 905L1440 860C1460 840 1530 840 1550 860L1557 905z" fill="#c8402e"/>
<path d="M1485 870L1535 865 1550 905 1480 905z" fill="#e0c070"/>
<path d="M1477 837L1533 830C1545 847 1561 864 1553 874L1545 878C1547 892 1535 904 1515 904L1483 902z" fill="#cc967e"/>
<path d="M1513 852l14 -2M1531 884l10 -2" stroke="#6a4a3a" stroke-width="4"/>
<path d="M1450 840L1477 840 1481 902 1447 892z" fill="#3a2a22"/>
<path d="M1465 840L1490 840 1487 892 1467 887z" fill="#d9c04a"/>
<path d="M1451 842L1457 777C1465 757 1515 752 1525 764L1543 832z" fill="#d8c04a" stroke="#8a6a30" stroke-width="3"/>
<path d="M1457 777C1465 757 1515 752 1525 764L1529 780C1505 782 1475 786 1456 792z" fill="#c4302a"/>
<path d="M1449 840L1545 828" stroke="#c4302a" stroke-width="9"/>
<path d="M1455 816L1537 806" stroke="#e8dca0" stroke-width="6" opacity="0.8"/>
<path d="M1500 905L1505 860C1525 840 1595 840 1615 860L1622 905z" fill="#c8402e"/>
<path d="M1550 870L1600 865 1615 905 1545 905z" fill="#e0c070"/>
<path d="M1542 827L1598 820C1610 837 1626 854 1618 864L1610 868C1612 882 1600 894 1580 894L1548 892z" fill="#cc967e"/>
<path d="M1578 842l14 -2M1596 874l10 -2" stroke="#6a4a3a" stroke-width="4"/>
<path d="M1515 830L1542 830 1546 892 1512 882z" fill="#3a2a22"/>
<path d="M1530 830L1555 830 1552 882 1532 877z" fill="#d9c04a"/>
<path d="M1516 832L1522 767C1530 747 1580 742 1590 754L1608 822z" fill="#d8c04a" stroke="#8a6a30" stroke-width="3"/>
<path d="M1522 767C1530 747 1580 742 1590 754L1594 770C1570 772 1540 776 1521 782z" fill="#c4302a"/>
<path d="M1514 830L1610 818" stroke="#c4302a" stroke-width="9"/>
<path d="M1520 806L1602 796" stroke="#e8dca0" stroke-width="6" opacity="0.8"/>
<path d="M1610 905L1615 860C1635 840 1705 840 1725 860L1732 905z" fill="#c8402e"/>
<path d="M1660 870L1710 865 1725 905 1655 905z" fill="#e0c070"/>
<path d="M1652 803L1708 796C1720 813 1736 830 1728 840L1720 844C1722 858 1710 870 1690 870L1658 868z" fill="#cc967e"/>
<path d="M1688 818l14 -2M1706 850l10 -2" stroke="#6a4a3a" stroke-width="4"/>
<path d="M1625 806L1652 806 1656 868 1622 858z" fill="#3a2a22"/>
<path d="M1640 806L1665 806 1662 858 1642 853z" fill="#d9c04a"/>
<path d="M1626 808L1632 743C1640 723 1690 718 1700 730L1718 798z" fill="#d8c04a" stroke="#8a6a30" stroke-width="3"/>
<path d="M1632 743C1640 723 1690 718 1700 730L1704 746C1680 748 1650 752 1631 758z" fill="#c4302a"/>
<path d="M1624 806L1720 794" stroke="#c4302a" stroke-width="9"/>
<path d="M1630 782L1712 772" stroke="#e8dca0" stroke-width="6" opacity="0.8"/>
</g>
</svg>
</div></div>
<div class="a" style="left:0;top:1004px;width:1920px;height:5px;background:#f7f7f7"></div>
<div class="a" style="left:0;top:1008px;width:1920px;height:72px;background:linear-gradient(90deg,#e2ddcf 0px,#dee3c4 130px,#d9e8b6 240px,#dde5c4 340px,#e0e0cc 480px,#e3e0ce 650px,#e3ddcf 800px,#d9e3dd 880px,#d3e6ea 960px,#d3e7eb 1400px,#d6e6e8 1920px);border-top:2px solid #aab0a8"></div>
<svg class="o" width="1920" height="1080">
<path d="M1902.6 186.5l6.5 9h-13z" fill="#8a8a8a" stroke="#8a8a8a" stroke-width="2" stroke-linejoin="round"/>
<rect x="1896.5" y="208" width="12.5" height="25" rx="6.25" fill="#8a8a8a"/>
<path d="M1902.4 990l6.5-9h-13z" fill="#8a8a8a" stroke="#8a8a8a" stroke-width="2" stroke-linejoin="round"/>
<rect x="1836" y="918" width="36" height="36" rx="7" fill="#d8a3a0"/>
<g fill="none" stroke="#f6f0f0" stroke-width="1.6" stroke-linecap="round">
<path d="M1852.8 924.5c-1.5 0-2 2-1.5 4.5.5 3 1.5 5 3 7.5 1.5 2.5 4 4.6 6.5 5.4 2.5.8 4.6.3 4.5-1-.2-1.6-2.8-2.4-6-2.1-3.4.3-7 1.5-9.5 3.3-2.6 1.9-4.3 3.8-5.6 5.6-1 1.5-.5 2.6.9 2.2 1.5-.4 3-2 4.5-4.5 1.8-3 3.5-6.8 4.6-10.5 1-3.5 1.4-6.5.8-8.5-.4-1.3-1.2-1.9-2.2-1.9z"/>
</g>
</svg>
<svg class="o" width="1920" height="1080">
<defs>
<linearGradient id="moon" x1="0" y1="0" x2="0" y2="1"><stop offset="0" stop-color="#f6c230"/><stop offset="1" stop-color="#ec7a18"/></linearGradient>
<linearGradient id="winl" gradientUnits="userSpaceOnUse" x1="444" y1="1027" x2="479" y2="1062"><stop offset="0" stop-color="#48cbfb"/><stop offset="0.5" stop-color="#1a96e2"/><stop offset="1" stop-color="#0068d0"/></linearGradient>
<linearGradient id="tv1" x1="0" y1="0" x2="0" y2="1"><stop offset="0" stop-color="#1e2a98"/><stop offset="0.4" stop-color="#6a4ec0"/><stop offset="0.7" stop-color="#c890c8"/><stop offset="1" stop-color="#e8c0a0"/></linearGradient>
<linearGradient id="tvs" x1="0" y1="0" x2="1" y2="1"><stop offset="0" stop-color="#8ad0e8"/><stop offset="0.5" stop-color="#4a6a9a"/><stop offset="1" stop-color="#1a1a5a"/></linearGradient>
<linearGradient id="cpl" x1="0" y1="0" x2="0" y2="1"><stop offset="0" stop-color="#22b6fa"/><stop offset="0.35" stop-color="#1592d0"/><stop offset="0.65" stop-color="#5ab060"/><stop offset="1" stop-color="#f4d000"/></linearGradient>
<linearGradient id="cpr" x1="0.3" y1="0" x2="0.6" y2="1"><stop offset="0" stop-color="#a84ee8"/><stop offset="0.5" stop-color="#f25a8c"/><stop offset="1" stop-color="#ffa05a"/></linearGradient>
<linearGradient id="edge1" x1="0" y1="0" x2="0.6" y2="1"><stop offset="0" stop-color="#1b86d8"/><stop offset="1" stop-color="#0c4f9e"/></linearGradient>
<linearGradient id="edge2" x1="0" y1="0" x2="1" y2="0.6"><stop offset="0" stop-color="#1e9ee0"/><stop offset="0.55" stop-color="#30c0c8"/><stop offset="1" stop-color="#70d860"/></linearGradient>
<linearGradient id="ff" x1="0" y1="0" x2="0" y2="1"><stop offset="0" stop-color="#ffc83a"/><stop offset="0.5" stop-color="#ff6a2a"/><stop offset="1" stop-color="#e8286a"/></linearGradient>
<linearGradient id="tvw" x1="0" y1="0" x2="1" y2="1"><stop offset="0" stop-color="#fafafa"/><stop offset="1" stop-color="#cfcfcf"/></linearGradient>
<linearGradient id="tvb" x1="0" y1="0" x2="1" y2="1"><stop offset="0" stop-color="#444"/><stop offset="1" stop-color="#0e0e0e"/></linearGradient>
</defs>
<path d="M30.8 1043.5c6 3 15 1.5 20-4 3-3.5 5-7 5.8-11 4.8 2 8 7.5 7.6 13.5-.6 10-9 17.8-19.2 17.6-6.8-.1-12.3-7-14.2-16.1z" fill="url(#moon)"/>
<circle cx="57.5" cy="1029" r="11.6" fill="#c42b1c"/>
<text x="57.5" y="1034.8" font-family="Liberation Sans" font-size="15.5" fill="#fff" text-anchor="middle">2</text>
<!-- windows logo -->
<path d="M444 1044.2V1029.5a2 2 0 0 1 2-2h14.5v16.7zM462 1027.5h14.5a2 2 0 0 1 2 2v14.7h-16.5zM444 1045.8h16.5v16.7h-14.5a2 2 0 0 1 -2-2zM462 1045.8h16.5v14.7a2 2 0 0 1 -2 2h-14.5z" fill="url(#winl)"/>
<!-- search box -->
<rect x="501" y="1021.5" width="326" height="44.5" rx="22.25" fill="#f6f5ee" stroke="#c4c6b4" stroke-width="1.2"/>
<circle cx="526" cy="1042.5" r="7.8" fill="none" stroke="#1a1a1a" stroke-width="2.2"/>
<path d="M531.8 1048.3l6 6" stroke="#1a1a1a" stroke-width="2.4" stroke-linecap="round"/>
<!-- tv image -->
<path d="M752 1048C750 1038 755 1029 765 1028C772 1025 780 1027 786 1026C794 1024 800 1027 806 1030C815 1030 820 1036 820 1044L821 1054 812 1063 760 1064 752 1056z" fill="url(#tv1)"/>
<path d="M780 1042L768 1030 778 1028zM788 1042L790 1026 798 1027zM795 1042L806 1029 812 1033z" fill="#f8d8a0" opacity="0.28"/>
<rect x="757" y="1047" width="2.5" height="7" fill="#9ac8e8"/><rect x="760" y="1045" width="3" height="9" fill="#e8d0c0"/><rect x="763" y="1043" width="3" height="11" fill="#8a3a6a"/>
<rect x="804" y="1043" width="4" height="11" fill="#d0c8f0"/><rect x="808" y="1047" width="4" height="7" fill="#b06040"/><rect x="812" y="1044" width="3.5" height="10" fill="#e8d8d0"/>
<path d="M751.5 1054h70l-3 3h-2l1 2c0 3-3 5-6 5h-50c-3 0-5-2-5-5l1-2h-3z" fill="#3a4468"/>
<path d="M760 1059h52l3 5h-58z" fill="#f26a2a"/>
<rect x="769" y="1042" width="34" height="17" rx="1" fill="url(#tvs)" stroke="#0e1030" stroke-width="1.3"/>
<!-- task view -->
<rect x="857" y="1027" width="25.5" height="24" rx="2" fill="url(#tvw)"/>
<rect x="846.7" y="1037.5" width="29" height="23.5" rx="2.5" fill="url(#tvb)"/>
<rect x="857" y="1037.5" width="18.7" height="13.5" fill="#9a9a9a" opacity="0.85"/>
<!-- file explorer -->
<path d="M913 1030a2 2 0 0 1 2-2h9l3 3h20a2 2 0 0 1 2 2v27h-36z" fill="#e8a81e"/>
<rect x="913" y="1033" width="36" height="27.5" rx="1.5" fill="#fbcb45"/>
<path d="M919 1060.5v-7a3 3 0 0 1 3-3h18a3 3 0 0 1 3 3v7z" fill="#1a78d0"/>
<path d="M925 1054.5h12" stroke="#0a4a90" stroke-width="1.5"/>
<rect x="927" y="1068.3" width="9.3" height="4.2" rx="2.1" fill="#7a8080"/>
<!-- teams -->
<circle cx="998" cy="1033" r="5.5" fill="#7b83eb"/>
<circle cx="1008.5" cy="1035" r="4" fill="#5059c9"/>
<path d="M1003 1041h10a1.5 1.5 0 0 1 1.5 1.5v9a6 6 0 0 1 -6 6h-3z" fill="#5059c9"/>
<path d="M989 1040h17a2 2 0 0 1 2 2v11a7.5 7.5 0 0 1 -7.5 7.5h-3a7.5 7.5 0 0 1 -7.5-7.5z" fill="#7b83eb"/>
<rect x="978.3" y="1035" width="19.5" height="19.5" rx="2" fill="#4b53bc"/>
<path d="M982.5 1039.5h11M988 1039.5v11" stroke="#fff" stroke-width="2.6"/>
<!-- firefox -->
<circle cx="1063" cy="1044" r="16.5" fill="url(#ff)"/>
<circle cx="1064" cy="1045" r="9" fill="#7a3ad8"/>
<path d="M1047 1038c2-6 6-10 10-11-1 3 0 5 2 6-4 1-7 3-8 7-2-1-3-1-4-2z" fill="#ff9a2a"/>
<path d="M1066 1026c5 3 10 7 13 14-3-3-6-4-9-4 1-3 0-7-4-10z" fill="#ffd23a"/>
<path d="M1053 1040c3-2 8-2 11 0-3 1-5 3-6 5-2-2-4-3-5-5z" fill="#ff7a2a"/>
<!-- edge highlight -->
<rect x="1101" y="1016" width="56" height="56.5" rx="5" fill="#eef5f6" stroke="#dfe9eb" stroke-width="1"/>
<g transform="translate(1110,1025.5) scale(0.38)">
<path d="M8 46C10 20 32 4 56 4 82 4 99 24 99 46 99 60 88 68 74 68 63 68 56 63 56 56 56 50 62 48 62 41 62 30 52 23 42 23 28 23 14 33 8 46z" fill="url(#edge2)"/>
<path d="M8 46C2 74 22 97 52 98 68 98 82 92 90 84 76 90 56 89 45 79 34 69 36 53 50 46 36 38 16 40 8 46z" fill="url(#edge1)"/>
<path d="M8 46C14 36 28 30 40 32 48 33 52 38 50 46 38 50 32 62 36 74 20 70 8 60 8 46z" fill="#0d5cb0" opacity="0.55"/>
</g>
<rect x="1117" y="1068.3" width="23.8" height="4.2" rx="2.1" fill="#2c7f8c"/>
<!-- store -->
<path d="M1183.5 1033v-4a2 2 0 0 1 2-2h18a2 2 0 0 1 2 2v4" fill="none" stroke="#2ac0ff" stroke-width="2"/>
<rect x="1177" y="1031" width="35.3" height="30.7" rx="3" fill="#1c4f8f"/>
<rect x="1186" y="1038" width="7.5" height="7.5" fill="#f25022"/>
<rect x="1195" y="1038" width="7.5" height="7.5" fill="#7fba00"/>
<rect x="1186" y="1047" width="7.5" height="7.5" fill="#00a4ef"/>
<rect x="1195" y="1047" width="7.5" height="7.5" fill="#ffb900"/>
<!-- chrome -->
<circle cx="1261" cy="1044" r="18" fill="#db4437"/>
<path d="M1261 1044L1245.4 1035A18 18 0 0 0 1261 1062z" fill="#0f9d58"/>
<path d="M1261 1044L1261 1062A18 18 0 0 0 1276.6 1035z" fill="#f4b400"/>
<path d="M1261 1044L1276.6 1035 1261 1026 1245.4 1035z" fill="#db4437"/>
<circle cx="1261" cy="1044" r="8.5" fill="#fff"/>
<circle cx="1261" cy="1044" r="6.8" fill="#4285f4"/>
<circle cx="1275.2" cy="1030.4" r="11.8" fill="#5a5550"/>
<path d="M1268 1036c1-5 3-9 7-9 4 0 6 4 7 9-2 3-4 4-7 4s-5-1-7-4z" fill="#d8d8d8"/>
<path d="M1275 1022v9" stroke="#eee" stroke-width="2"/>
<rect x="1257" y="1068.3" width="9" height="4.2" rx="2.1" fill="#7a8080"/>
<!-- copilot -->
<g transform="translate(1307,1024) scale(0.0385)">
<path d="M350 160L700 160C760 160 790 200 810 260L860 380 700 380C650 380 620 400 600 450L480 740 250 740C180 740 140 690 160 620L300 250C320 190 340 160 350 160z" fill="url(#cpl)"/>
<path d="M640 160L700 160C760 160 790 200 810 260L860 380 600 380C640 300 650 200 640 160z" fill="#1c4ed0" opacity="0.85"/>
<path d="M720 380L960 380C1030 380 1060 440 1040 520L900 880C880 940 850 960 800 960L520 960C460 960 430 940 420 900L360 750 520 740C560 740 590 720 610 680z" fill="url(#cpr)"/>
<path d="M360 750L600 740 540 920C520 960 480 970 450 950 420 930 400 860 360 750z" fill="#f0603a"/>
</g>
<!-- whatsapp -->
<path d="M1393 1027a17 17 0 1 1 -8.5 31.8l-9.5 2.7 2.8-9.2A17 17 0 0 1 1393 1027z" fill="none" stroke="#1a9a4a" stroke-width="3.2" stroke-linejoin="round"/>
<path d="M1385 1037c1-2 3-2 4 0l2 4c.5 1-1 2.5-1.5 3 1.5 3 4 5.5 7 7 .5-.5 2-2 3-1.5l4 2c2 1 2 3 0 4.5-3 2.5-7 2-11.5-1.5-4.5-3.5-8-8-8.5-12.5-.2-2 .3-3.5 1.5-5z" fill="#1a9a4a"/>
<circle cx="1407" cy="1030.7" r="12" fill="#23819a"/>
<text x="1407" y="1036.5" font-family="Liberation Sans" font-size="15.5" fill="#fff" text-anchor="middle">1</text>
<rect x="1389" y="1068.3" width="9" height="4.2" rx="2.1" fill="#7a8080"/>
<!-- remote chrome app -->
<rect x="1448.5" y="1030" width="26.5" height="20" rx="1.5" fill="#f2f2f2" stroke="#707070" stroke-width="2"/>
<rect x="1442" y="1037" width="26.5" height="21" rx="1.5" fill="#f6f6f6" stroke="#8a8a8a" stroke-width="2"/>
<path d="M1445 1057a10 9 0 0 1 20 0z" fill="#db4437"/>
<path d="M1445 1057a10 9 0 0 1 4-7.2l6 7.2z" fill="#0f9d58"/>
<path d="M1465 1057a10 9 0 0 0 -4-7.2l-6 7.2z" fill="#f4b400"/>
<circle cx="1455" cy="1057" r="3.5" fill="#4285f4" stroke="#fff" stroke-width="1.2"/>
<!-- tray -->
<path d="M1643.5 1047.5l7.5-7.8 7.5 7.8" fill="none" stroke="#1a1a1a" stroke-width="1.9" stroke-linecap="round" stroke-linejoin="round"/>
<path d="M1688 1040.5a16 16 0 0 1 22.5 0" fill="none" stroke="#b8bcbc" stroke-width="1.6" stroke-linecap="round"/>
<path d="M1692 1044.5a10.5 10.5 0 0 1 14.5 0" fill="none" stroke="#b8bcbc" stroke-width="1.6" stroke-linecap="round"/>
<path d="M1695.5 1048a5.5 5.5 0 0 1 7.5 0" fill="none" stroke="#1a1a1a" stroke-width="1.6" stroke-linecap="round"/>
<circle cx="1699.2" cy="1050.6" r="1.6" fill="#1a1a1a"/>
<path d="M1723.5 1039.5h4.5l6-5.5v18l-6-5.5h-4.5z" fill="none" stroke="#1a1a1a" stroke-width="1.7" stroke-linejoin="round"/>
<path d="M1737 1040a5 5 0 0 1 0 7" fill="none" stroke="#1a1a1a" stroke-width="1.7" stroke-linecap="round"/>
<path d="M1740.5 1036.5a10 10 0 0 1 0 14" fill="none" stroke="#b0b4b4" stroke-width="1.5" stroke-linecap="round"/>
<path d="M1744 1034a14 14 0 0 1 0 19" fill="none" stroke="#c4c8c8" stroke-width="1.4" stroke-linecap="round"/>
<rect x="1760" y="1037.5" width="20" height="13.5" rx="2.5" fill="none" stroke="#1a1a1a" stroke-width="1.8"/>
<rect x="1780.8" y="1041.5" width="2.5" height="5.5" rx="1" fill="#1a1a1a"/>
<path d="M1763 1048v-8h10l-6 8z" fill="#1a1a1a"/>
<path d="M1764.5 1032.5l-2.5 5h3.5l-2 5" fill="none" stroke="#1a1a1a" stroke-width="1.5"/>
</svg>
<div class="t" style="left:76.37px;top:1022.00px;font-size:18.17px;font-weight:normal;color:#1a1a1a;transform:scaleX(0.9164);transform-origin:0 0;">70°F</div>
<div class="t" style="left:76.34px;top:1047.00px;font-size:18.02px;font-weight:normal;color:#505050;transform:scaleX(0.9494);transform-origin:0 0;">Clear</div>
<div class="t" style="left:555.13px;top:1034.00px;font-size:21.80px;font-weight:normal;color:#5c5c5c;transform:scaleX(0.8918);transform-origin:0 0;">Search</div>
<div class="t" style="left:1826.12px;top:1023.00px;font-size:18.90px;font-weight:normal;color:#1a1a1a;transform:scaleX(0.9332);transform-origin:0 0;">7:51 PM</div>
<div class="t" style="left:1807.45px;top:1047.00px;font-size:18.31px;font-weight:normal;color:#1a1a1a;transform:scaleX(1.0258);transform-origin:0 0;">9/14/2025</div>
</body></html>
